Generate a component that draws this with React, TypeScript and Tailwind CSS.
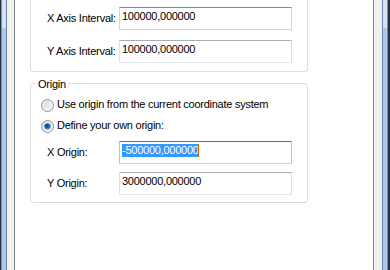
import React from "react";

type Tone = "normal" | "hover" | "focus";

const toneClass: Record<Tone, string> = {
  normal: "border-t-[#abadb3] border-x-[#dbdfe6] border-b-[#e3e9ef]",
  hover: "border-t-[#5794bf] border-x-[#c5daed] border-b-[#b7d5ea]",
  focus: "border-t-[#3d7bad] border-x-[#a4c9e3] border-b-[#b7d9ed]",
};

function TextBox({ value, tone = "normal", selected = false }: { value: string; tone?: Tone; selected?: boolean }) {
  return (
    <div className={`flex h-[23px] w-[173px] items-start rounded-[1px] border bg-white pl-[2px] pt-[2px] ${toneClass[tone]}`}>
      {selected ? (
        <span className="flex items-start">
          <span className="bg-[#3399ff] leading-[13px] text-white">{value}</span>
          <span className="-ml-[1px] h-[13px] w-[1px] bg-[#cc6600]" />
        </span>
      ) : (
        <span className="leading-[13px] text-black">{value}</span>
      )}
    </div>
  );
}

function Row({ label, value, tone, selected }: { label: string; value: string; tone?: Tone; selected?: boolean }) {
  return (
    <div className="flex items-center">
      <span className="w-[72px] leading-[13px]">{label}</span>
      <TextBox value={value} tone={tone} selected={selected} />
    </div>
  );
}

function Radio({ checked, label }: { checked?: boolean; label: string }) {
  return (
    <div className="flex h-[13px] items-center gap-[3px]">
      <svg width="13" height="13" viewBox="0 0 13 13" className="shrink-0">
        <defs>
          <linearGradient id={`rf${checked ? 1 : 0}`} x1="0" y1="0" x2="1" y2="1">
            <stop offset="0" stopColor="#d6d8dc" />
            <stop offset="1" stopColor="#f8f8f8" />
          </linearGradient>
          <radialGradient id="dot" cx="0.45" cy="0.4" r="0.6">
            <stop offset="0" stopColor="#0b3f73" />
            <stop offset="0.55" stopColor="#1d68ad" />
            <stop offset="1" stopColor="#6fb7ea" />
          </radialGradient>
        </defs>
        <circle cx="6.5" cy="6.5" r="6" fill={`url(#rf${checked ? 1 : 0})`} stroke="#8f9296" strokeWidth="1" />
        <circle cx="6.5" cy="6.5" r="4.6" fill="none" stroke="#f4f4f4" strokeWidth="0.8" />
        {checked && <circle cx="6.5" cy="6.5" r="3.3" fill="url(#dot)" />}
      </svg>
      <span className="mb-[3px] leading-[13px]">{label}</span>
    </div>
  );
}

function FrameEdge({ side }: { side: "left" | "right" }) {
  const light = (
    <div className="flex w-[4px] flex-col">
      <div className="h-[28px] bg-[#d4e2f1]" />
      <div className="flex-1 bg-[#abc9ec]" />
    </div>
  );
  if (side === "left") {
    return (
      <div className="flex w-[7px] shrink-0">
        <div className="w-[1px] bg-[#23313f]" />
        <div className="w-[1px] bg-[#6f94bf]" />
        {light}
        <div className="w-[1px] bg-[#6986ab]" />
      </div>
    );
  }
  return (
    <div className="flex w-[8px] shrink-0">
      <div className="w-[1px] bg-[#6986ab]" />
      {light}
      <div className="w-[1px] bg-[#6f94bf]" />
      <div className="w-[2px] bg-[#23313f]" />
    </div>
  );
}

export default function App() {
  return (
    <div className="flex h-[270px] w-[390px] overflow-hidden bg-[#f0f0f0] font-['Liberation_Sans',Arial,sans-serif] text-[11px] leading-[13px] tracking-[-0.25px] text-black">
      <FrameEdge side="left" />
      <div className="w-[7px] shrink-0 bg-[#f0f0f0]" />
      <div className="w-[360px] shrink-0 border-x border-[#828790] bg-white pl-[15px]">
        <div className="flex h-[72px] w-[278px] flex-col gap-[10px] rounded-b-[3px] border-x border-b border-[#d5dfe5] pl-[16px] pt-[7px]">
          <Row label="X Axis Interval:" value="100000,000000" tone="hover" />
          <Row label="Y Axis Interval:" value="100000,000000" />
        </div>
        <fieldset className="mt-[4px] w-[278px] rounded-[3px] border border-[#d5dfe5]">
          <legend className="ml-[5px] px-[2px] pt-[2px] leading-[13px]">Origin</legend>
          <div className="flex flex-col pb-[7px] pt-[8px]">
            <div className="flex flex-col gap-[8px] pl-[10px]">
              <Radio label="Use origin from the current coordinate system" />
              <Radio checked label="Define your own origin:" />
            </div>
            <div className="mt-[8px] flex flex-col gap-[8px] pl-[16px]">
              <Row label="X Origin:" value="-500000,000000" tone="focus" selected />
              <Row label="Y Origin:" value="3000000,000000" />
            </div>
          </div>
        </fieldset>
      </div>
      <div className="w-[8px] shrink-0 bg-[#f0f0f0]" />
      <FrameEdge side="right" />
    </div>
  );
}
